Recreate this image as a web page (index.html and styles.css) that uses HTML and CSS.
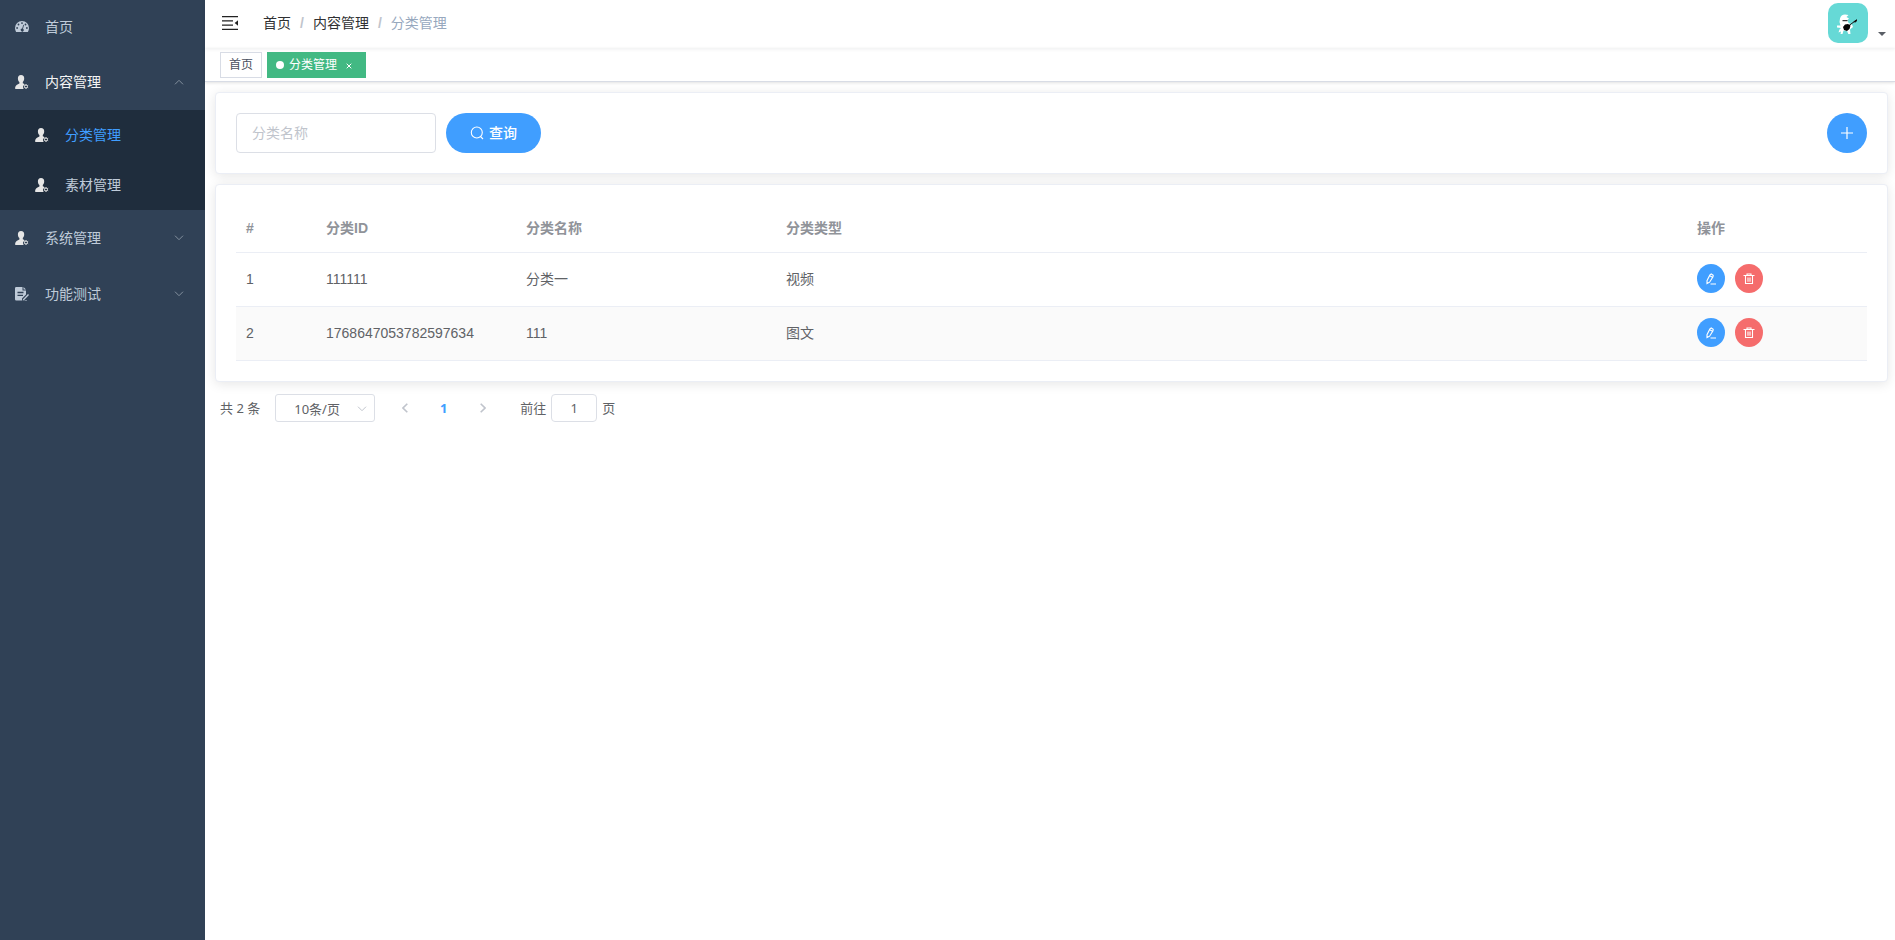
FILE: index.html
```
<!DOCTYPE html>
<html lang="zh-CN">
<head>
<meta charset="utf-8">
<title>分类管理</title>
<link rel="stylesheet" href="styles.css">
</head>
<body>
<svg class="sprite" aria-hidden="true">
  <symbol id="user" viewBox="0 0 14 14">
    <path fill="#e6e6e6" d="M6 0C8.200 0 9.300 1.400 9.200 3.600 9.200 5.200 8.600 6.300 7.800 7V8.300C8.600 8.800 9.300 9 9.800 9.400 8.600 10 7.900 11 8 12.200 8.100 12.900 8.300 13.500 8.700 14H1C.3 14 0 13.500.1 12.700.3 10.300 2.500 9.600 4.400 8.500V7C3.500 6.300 3 5.200 2.900 3.700 2.800 1.400 3.900 0 6 0Z"/>
    <circle cx="11" cy="11.500" r="1.500" fill="none" stroke="#e6e6e6" stroke-width="1"/>
    <path fill="none" stroke="#e6e6e6" stroke-width=".8" d="M11 9V10M11 13V14M8.800 10.200 9.700 10.700M12.300 12.300 13.200 12.800M13.200 10.200 12.300 10.700M9.700 12.300 8.800 12.800"/>
  </symbol>
  <symbol id="down" viewBox="0 0 10 6"><path d="M1 .7 5 4.700 9 .7" fill="none" stroke="currentColor"/></symbol>
  <symbol id="edit" viewBox="0 0 12 12"><path d="M4.900 1.900 6.200 1 8.200 2.200 8 3.700 4.600 9.200 2 10.500 2 7.700ZM4.700 2.700 7.500 4.300M5.500 11H11" fill="none" stroke="currentColor" stroke-width="1.100"/></symbol>
  <symbol id="trash" viewBox="0 0 12 12"><path d="M.5 2.500H11.500M4 2.500V1H8V2.500M2.500 2.500V10.500H9.500V2.500M5 4.500V8.700M7 4.500V8.700" fill="none" stroke="currentColor" stroke-width="1.100"/></symbol>
</svg>
<div class="app">
  <aside class="sidebar">
    <nav class="menu">
      <a class="menu-item menu-home" href="#">
        <svg class="menu-icon" viewBox="0 0 14 14"><path fill="currentColor" d="M7 1A7 7 0 0 0 0 8C0 9.500.4 10.700 1.100 11.900H12.900C13.600 10.700 14 9.500 14 8A7 7 0 0 0 7 1Z"/><g fill="#304156"><circle cx="7" cy="3.100" r=".9"/><circle cx="3.500" cy="4.500" r=".9"/><circle cx="10.500" cy="4.500" r=".9"/><circle cx="2.100" cy="8" r=".9"/><circle cx="11.900" cy="8" r=".9"/><path d="M8.300 4.700 9 4.900 8 8.700A1.500 1.500 0 1 1 7.200 8.500Z"/></g></svg>
        <span>首页</span>
      </a>
      <button class="menu-item is-open" type="button" aria-expanded="true">
        <svg class="menu-icon"><use href="#user"/></svg><span>内容管理</span>
        <svg class="menu-arrow flipped"><use href="#down"/></svg>
      </button>
      <div class="submenu">
        <a class="menu-item is-active" href="#"><svg class="menu-icon"><use href="#user"/></svg><span>分类管理</span></a>
        <a class="menu-item" href="#"><svg class="menu-icon"><use href="#user"/></svg><span>素材管理</span></a>
      </div>
      <button class="menu-item" type="button" aria-expanded="false">
        <svg class="menu-icon"><use href="#user"/></svg><span>系统管理</span>
        <svg class="menu-arrow"><use href="#down"/></svg>
      </button>
      <button class="menu-item" type="button" aria-expanded="false">
        <svg class="menu-icon" viewBox="0 0 14 14"><path fill="currentColor" d="M1.200 0H7.500V3.500H11V7.500L7 11.500V13.500H1.200Q0 13.500 0 12.300V1.200Q0 0 1.200 0ZM8.500 0 11 2.500H8.500ZM13 7 14 8 8.900 13.200 7.700 13.600 8 12.200ZM9.500 13.600V12.900H12V13.600Z"/><path d="M2.500 5.500H8.500M2.500 8.300H8" stroke="#304156" stroke-width="1.300"/></svg>
        <span>功能测试</span>
        <svg class="menu-arrow"><use href="#down"/></svg>
      </button>
    </nav>
  </aside>
  <div class="page">
    <header class="navbar">
      <button class="collapse" type="button" aria-label="收起菜单">
        <svg viewBox="0 0 16 14" width="16" height="14"><path d="M0 .6H16M0 4.900H11M0 9.100H11M0 13.400H16" stroke="#222" stroke-width="1.200"/><path d="M16 4.300V9.700L12.700 7Z" fill="#222"/></svg>
      </button>
      <nav class="breadcrumb" aria-label="面包屑">
        <a href="#">首页</a><span class="sep">/</span><a href="#">内容管理</a><span class="sep">/</span><span class="current">分类管理</span>
      </nav>
      <button class="account" type="button" aria-label="用户菜单">
        <svg class="avatar" viewBox="0 0 40 40"><rect width="40" height="40" fill="#66d9d6"/><path fill="#fff" d="M12 15.500Q13 11.500 17 11.500L20.500 12 18.500 14 21 15.500 19.500 17 20.500 20 24 21.500 25 24 22 26.500 22.500 31H20.300L19 28 15.500 27.500 14.500 31H12.500L13 28.500 10.500 29.500 11.500 26.500 13 25 9 24.500V22.500L12.500 22.500 11.500 19Z"/><path d="M14.500 17.700H19.500M21 22.500 28.500 17" stroke="#111"/><path fill="#050505" d="M15 24 17 21.500 20 21 22.500 22.500 21.500 26 19 28 16 27Z"/><path fill="#111" d="M25.500 18.500 29 16.300V18L27 19.800Z"/></svg>
        <span class="caret"></span>
      </button>
    </header>
    <div class="tags">
      <a class="tag" href="#">首页</a>
      <span class="tag tag-active"><span class="dot"></span><a href="#">分类管理</a><button class="tag-close" type="button" aria-label="关闭"><svg viewBox="0 0 6 6" width="6" height="6"><path d="M.7.7 5.300 5.300M5.300.7.7 5.300" stroke="currentColor"/></svg></button></span>
    </div>
    <main class="content">
      <section class="card">
        <form class="toolbar">
          <input class="field" type="text" placeholder="分类名称" aria-label="分类名称">
          <button class="query" type="button"><svg viewBox="0 0 14 14" width="14" height="14"><circle cx="6.800" cy="6.500" r="5.500" fill="none" stroke="currentColor" stroke-width="1.100"/><path d="M10.500 10.500 13 13" stroke="currentColor" stroke-width="1.100"/></svg><span>查询</span></button>
          <button class="add" type="button" aria-label="新增"><svg viewBox="0 0 14 14" width="14" height="14"><path d="M1 7H13M7 1V13" stroke="currentColor" stroke-width="1.200"/></svg></button>
        </form>
      </section>
      <section class="card">
        <table class="grid">
          <colgroup><col class="c-index"><col class="c-id"><col class="c-name"><col><col class="c-ops"></colgroup>
          <thead><tr><th>#</th><th>分类ID</th><th>分类名称</th><th>分类类型</th><th>操作</th></tr></thead>
          <tbody>
            <tr><td>1</td><td>111111</td><td>分类一</td><td>视频</td>
              <td><div class="ops"><button class="round edit" type="button" aria-label="编辑"><svg><use href="#edit"/></svg></button><button class="round remove" type="button" aria-label="删除"><svg><use href="#trash"/></svg></button></div></td></tr>
            <tr><td>2</td><td>1768647053782597634</td><td>111</td><td>图文</td>
              <td><div class="ops"><button class="round edit" type="button" aria-label="编辑"><svg><use href="#edit"/></svg></button><button class="round remove" type="button" aria-label="删除"><svg><use href="#trash"/></svg></button></div></td></tr>
          </tbody>
        </table>
      </section>
      <div class="pager">
        <span class="total">共 2 条</span>
        <div class="size"><select aria-label="每页条数"><option>10条/页</option></select><svg><use href="#down"/></svg></div>
        <div class="pages">
          <button type="button" disabled aria-label="上一页"><svg viewBox="0 0 6 10" width="6" height="10"><path d="M5.300.7 1 5 5.300 9.300" fill="none" stroke="currentColor" stroke-width="1.600"/></svg></button>
          <button class="on" type="button">1</button>
          <button type="button" disabled aria-label="下一页"><svg viewBox="0 0 6 10" width="6" height="10"><path d="M.7.7 5 5 .7 9.300" fill="none" stroke="currentColor" stroke-width="1.600"/></svg></button>
        </div>
        <label class="jump">前往<input type="text" value="1">页</label>
      </div>
    </main>
  </div>
</div>
</body>
</html>
```
FILE: styles.css
```
* { box-sizing: border-box; }
body {
  margin: 0;
  font: 14px/20px "Liberation Sans", "Noto Sans CJK SC", sans-serif;
  color: #606266;
  background: #fff;
}
a { color: inherit; text-decoration: none; }
button { margin: 0; padding: 0; border: 0; background: none; font: inherit; color: inherit; cursor: pointer; }
input, select { font: inherit; color: #606266; }
svg { display: block; flex: none; }
.sprite { position: absolute; width: 0; height: 0; }
.app { display: flex; min-height: 100vh; }

.sidebar { flex: none; width: 205px; background: #304156; color: #bfcbd9; }
.menu-item {
  display: flex;
  align-items: center;
  gap: 16px;
  width: 100%;
  height: 56px;
  padding: 0 21px 0 15px;
  text-align: left;
}
.menu-home { height: 54px; }
.menu-icon { width: 14px; height: 14px; }
.menu-arrow { width: 10px; height: 6px; margin-left: auto; color: #83909e; }
.flipped { transform: rotate(180deg); }
.is-open { color: #f4f4f5; }
.submenu { background: #1f2d3d; }
.submenu .menu-item { height: 50px; padding-left: 35px; }
.is-active { color: #409eff; }

.page { flex: 1; min-width: 0; }
.navbar {
  display: flex;
  align-items: center;
  height: 48px;
  padding: 0 9px 2px 17px;
  box-shadow: 0 1px 4px rgba(0, 21, 41, .08);
}
.collapse { margin-right: 25px; }
.breadcrumb { display: flex; color: #303133; }
.sep { margin: 0 9px; color: #c0c4cc; font-weight: bold; }
.current { color: #97a8be; }
.account { display: flex; align-items: flex-end; gap: 10px; margin-left: auto; }
.avatar { width: 40px; height: 40px; border-radius: 10px; }
.caret { margin-bottom: 7px; border: 4px solid transparent; border-top-color: #5a5e66; border-bottom: 0; }

.tags {
  display: flex;
  gap: 5px;
  height: 34px;
  padding: 4px 15px 3px;
  border-bottom: 1px solid #d8dce5;
  box-shadow: 0 1px 3px rgba(0, 0, 0, .12);
  font-size: 12px;
  color: #495060;
}
.tag { display: flex; align-items: center; height: 26px; padding: 0 8px; border: 1px solid #d8dce5; }
.tag-active { background: #42b983; border-color: #42b983; color: #fff; }
.dot { width: 8px; height: 8px; margin-right: 5px; border-radius: 50%; background: #fff; }
.tag-close { margin: 2px 5px 0 9px; }

.content { display: grid; gap: 10px; padding: 10px 7px 10px 10px; }
.card {
  padding: 20px;
  border: 1px solid #ebeef5;
  border-radius: 4px;
  background: #fff;
  box-shadow: 0 2px 12px rgba(0, 0, 0, .1);
}
.toolbar { display: flex; gap: 10px; }
.field { width: 200px; height: 40px; padding: 0 15px; border: 1px solid #dcdfe6; border-radius: 4px; }
.field::placeholder { color: #c0c4cc; }
.query, .add, .round { display: flex; align-items: center; justify-content: center; color: #fff; background: #409eff; }
.query { gap: 5px; width: 95px; height: 40px; border-radius: 20px; font-weight: 500; }
.add { width: 40px; height: 40px; margin-left: auto; border-radius: 50%; }

.grid { width: 100%; table-layout: fixed; border-collapse: separate; border-spacing: 0; }
.c-index { width: 80px; }
.c-id { width: 200px; }
.c-name { width: 260px; }
.c-ops { width: 180px; }
.grid th, .grid td { height: 54px; padding: 0 10px 2px; border-bottom: 1px solid #ebeef5; text-align: left; }
.grid th { height: 48px; color: #909399; font-weight: bold; }
.grid tbody tr:nth-child(even) { background: #fafafa; }
.ops { display: flex; gap: 10px; }
.round { width: 28px; height: 29px; border-radius: 50%; }
.round svg { width: 12px; height: 12px; }
.remove { background: #f56c6c; }

.pager {
  display: flex;
  align-items: center;
  padding: 2px 5px;
  font: 13px/28px "Noto Sans", "Noto Sans CJK SC", sans-serif;
}
.total { margin-right: 15px; }
.size { position: relative; width: 100px; height: 28px; }
.size select {
  width: 100%;
  height: 28px;
  padding: 0 18px;
  border: 1px solid #dcdfe6;
  border-radius: 3px;
  background: #fff;
  appearance: none;
}
.size svg { position: absolute; top: 12px; right: 8px; width: 10px; height: 6px; color: #c0c4cc; pointer-events: none; }
.pages { display: flex; gap: 4px; margin: 0 20px 0 12px; }
.pages button { display: flex; align-items: center; justify-content: center; width: 35px; height: 28px; color: #c0c4cc; font-weight: bold; }
.pages .on { color: #409eff; }
.jump { display: flex; align-items: center; gap: 5px; }
.jump input { width: 46px; height: 28px; padding: 0 3px; border: 1px solid #dcdfe6; border-radius: 4px; text-align: center; }
```
